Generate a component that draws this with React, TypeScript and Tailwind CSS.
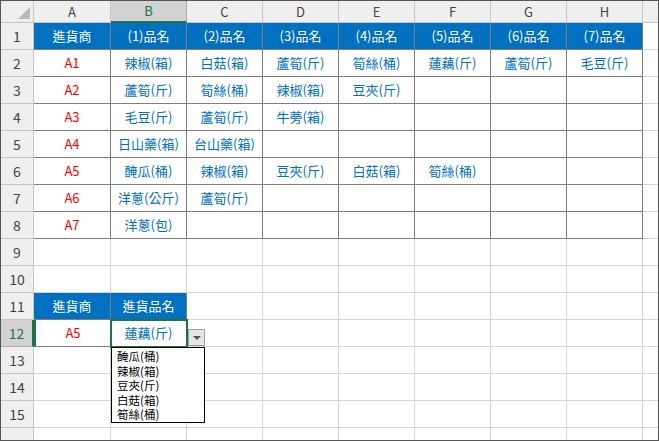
import React from 'react';

const cols = ['A', 'B', 'C', 'D', 'E', 'F', 'G', 'H', ''];
const widths = ['w-[77px]', 'w-[76px]', 'w-[76px]', 'w-[76px]', 'w-[76px]', 'w-[76px]', 'w-[76px]', 'w-[76px]', 'w-[16px]'];

const table: string[][] = [
  ['進貨商', '(1)品名', '(2)品名', '(3)品名', '(4)品名', '(5)品名', '(6)品名', '(7)品名'],
  ['A1', '辣椒(箱)', '白菇(箱)', '蘆筍(斤)', '筍絲(桶)', '蓮藕(斤)', '蘆筍(斤)', '毛豆(斤)'],
  ['A2', '蘆筍(斤)', '筍絲(桶)', '辣椒(箱)', '豆夾(斤)', '', '', ''],
  ['A3', '毛豆(斤)', '蘆筍(斤)', '牛蒡(箱)', '', '', '', ''],
  ['A4', '日山藥(箱)', '台山藥(箱)', '', '', '', '', ''],
  ['A5', '醃瓜(桶)', '辣椒(箱)', '豆夾(斤)', '白菇(箱)', '筍絲(桶)', '', ''],
  ['A6', '洋蔥(公斤)', '蘆筍(斤)', '', '', '', '', ''],
  ['A7', '洋蔥(包)', '', '', '', '', '', ''],
];

const font = { fontFamily: '"Noto Sans CJK TC", "Liberation Sans", sans-serif' };

function Cell({ row, col }: { row: number; col: number }) {
  let text = '';
  let cls = 'border-[#d4d4d4] text-[#0070c0]';
  if (row >= 1 && row <= 8 && col < 8) {
    text = table[row - 1][col];
    if (row === 1) cls = 'bg-[#0070c0] text-white border-[#7f7f7f]';
    else cls = col === 0 ? 'text-[#ff0000] border-[#7f7f7f]' : 'text-[#0070c0] border-[#7f7f7f]';
  } else if (row === 11 && col < 2) {
    text = col === 0 ? '進貨商' : '進貨品名';
    cls = 'bg-[#0070c0] text-white border-[#7f7f7f]';
  } else if (row === 12 && col < 2) {
    text = col === 0 ? 'A5' : '蓮藕(斤)';
    cls = col === 0 ? 'text-[#ff0000] border-[#7f7f7f] border-l-2 border-l-[#217346]' : 'text-[#0070c0] border-[#7f7f7f]';
  }
  const sel = row === 12 && col === 1 ? 'outline-2 outline-[#217346] -outline-offset-1 relative z-10' : '';
  return (
    <div className={`${widths[col]} h-full shrink-0 border-r border-b flex items-center justify-center text-[13px] ${cls} ${sel}`}>
      {text}
    </div>
  );
}

export default function App() {
  const rows = Array.from({ length: 16 }, (_, i) => i + 1);
  return (
    <div className="w-[659px] h-[441px] overflow-hidden bg-white border border-[#555] relative" style={font}>
      <div className="flex h-[22px] bg-[#efefef]">
        <div className="w-[33px] shrink-0 border-r border-b border-[#c6c6c6] relative">
          <div className="absolute right-[3px] bottom-[3px] w-0 h-0 border-l-[12px] border-l-transparent border-b-[12px] border-b-[#b9b9b9]" />
        </div>
        {cols.map((c, i) => (
          <div
            key={i}
            className={`${widths[i]} shrink-0 border-r flex items-center justify-center text-[13px] ${
              c === 'B' ? 'bg-[#d2d2d2] text-[#217346] border-b-2 border-b-[#217346] border-r-[#ababab]' : 'text-[#444] border-b border-[#c6c6c6]'
            }`}
          >
            {c}
          </div>
        ))}
      </div>
      {rows.map((r) => (
        <div key={r} className="flex h-[27px]">
          <div
            className={`w-[33px] shrink-0 border-r border-b flex items-end justify-center pb-[2px] text-[14px] ${
              r === 12 ? 'bg-[#d2d2d2] text-[#217346] border-r-2 border-r-[#217346] border-b-[#ababab]' : 'bg-[#efefef] text-[#444] border-[#c6c6c6]'
            }`}
          >
            {r <= 15 ? r : ''}
          </div>
          {cols.map((_, c) => (
            <Cell key={c} row={r} col={c} />
          ))}
        </div>
      ))}
      <div className="absolute left-[187px] top-[328px] w-[17px] h-[17px] bg-[#e6e6e6] border border-[#a0a0a0] flex items-center justify-center z-20">
        <div className="w-0 h-0 border-l-[4px] border-r-[4px] border-t-[4px] border-l-transparent border-r-transparent border-t-[#555]" />
      </div>
      <div className="absolute left-[110px] top-[346px] w-[94px] h-[76px] bg-white border border-black z-20 pl-[5px] text-[11.5px] text-black pt-[1px] flex flex-col">
        {['醃瓜(桶)', '辣椒(箱)', '豆夾(斤)', '白菇(箱)', '筍絲(桶)'].map((t) => (
          <div key={t} className="h-[15px] leading-[15px] overflow-hidden">{t}</div>
        ))}
      </div>
    </div>
  );
}
